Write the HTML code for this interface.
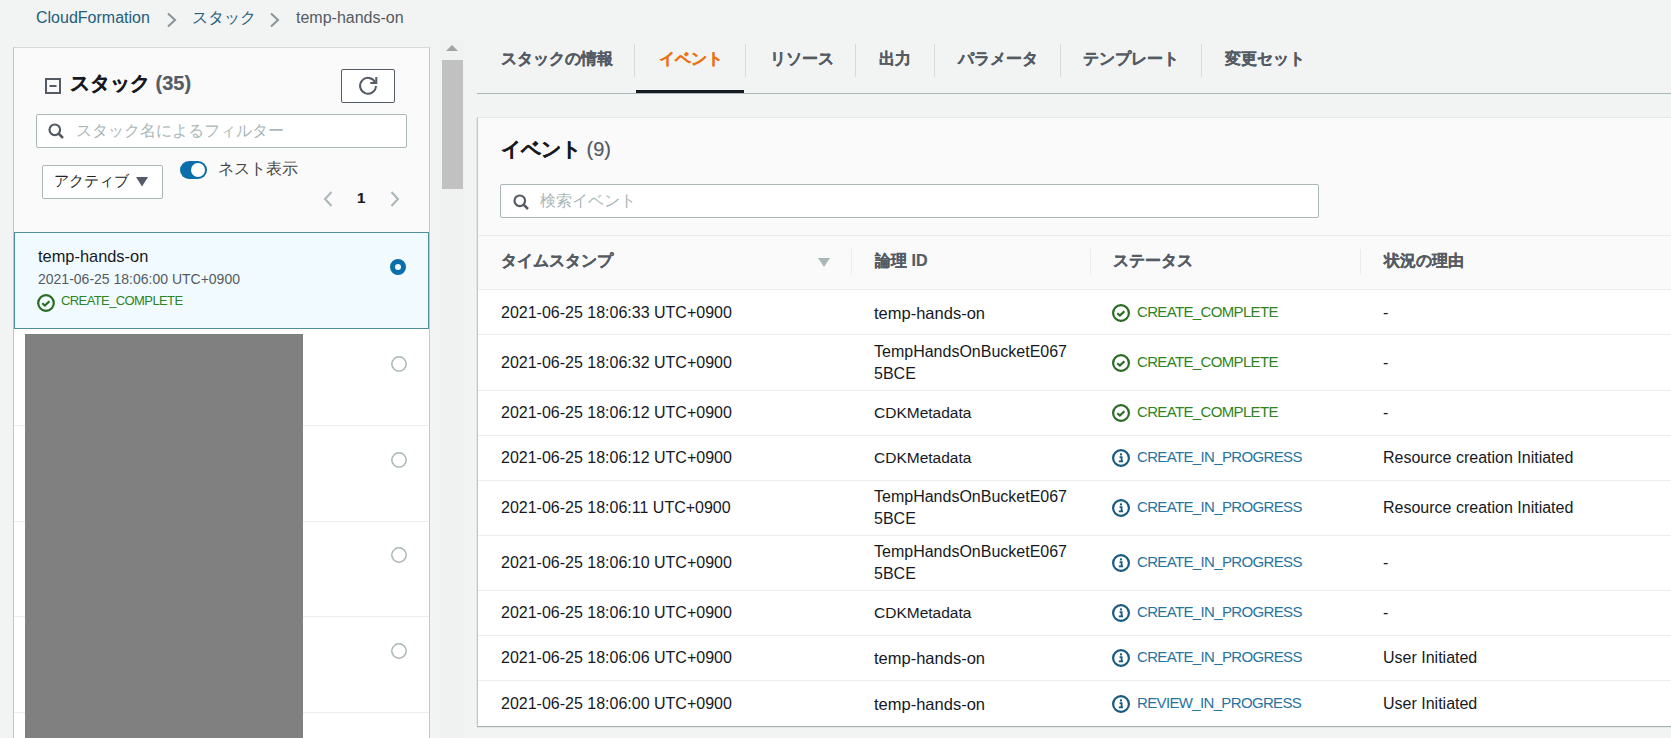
<!DOCTYPE html>
<html><head><meta charset="utf-8">
<style>
*{box-sizing:border-box;margin:0;padding:0}
html,body{width:1671px;height:738px;overflow:hidden;background:#f2f3f3;font-family:"Liberation Sans",sans-serif;color:#16191f}
.a{position:absolute;white-space:nowrap}
.t16{font-size:16px;line-height:20px}
.link{color:#23607a}
.gray{color:#545b64}
.b{font-weight:bold;-webkit-text-stroke:0.2px currentColor}
svg{position:absolute;overflow:visible}
.sep{position:absolute;height:1px;background:#eaeded}
.vdiv{position:absolute;width:1px;background:#d5dbdb}
.green{color:#2d8522}
.blue{color:#2773a0}
</style></head><body>

<!-- breadcrumb -->
<div class="a t16 link" style="left:36px;top:8px">CloudFormation</div>
<svg style="left:166px;top:12px" width="11" height="16" viewBox="0 0 11 16"><path d="M2 1.5 L9 8 L2 14.5" fill="none" stroke="#879596" stroke-width="2"/></svg>
<div class="a t16 link" style="left:192px;top:8px">スタック</div>
<svg style="left:269px;top:12px" width="11" height="16" viewBox="0 0 11 16"><path d="M2 1.5 L9 8 L2 14.5" fill="none" stroke="#879596" stroke-width="2"/></svg>
<div class="a t16 gray" style="left:296px;top:8px">temp-hands-on</div>

<!-- left panel -->
<div class="a" style="left:13px;top:47px;width:417px;height:700px;background:#fafafa;border:1px solid #d5dbdb;border-left-color:#c4c4c4;border-right-color:#c8c8c8"></div>
<div class="a" style="left:14px;top:232px;width:415px;height:510px;background:#fff"></div>

<svg style="left:45px;top:78px" width="16" height="16" viewBox="0 0 16 16"><rect x="1" y="1" width="14" height="14" fill="none" stroke="#545b64" stroke-width="2"/><path d="M4.5 8 H11.5" stroke="#545b64" stroke-width="2"/></svg>
<div class="a b" style="left:70px;top:71px;font-size:20px;line-height:24px">スタック <span class="gray">(35)</span></div>

<div class="a" style="left:341px;top:69px;width:54px;height:34px;border:1px solid #545b64;border-radius:2px;background:#fff"></div>
<svg style="left:358px;top:76px" width="20" height="20" viewBox="0 0 20 20"><path d="M17.9 9.9 A7.9 7.9 0 1 1 17.1 6.3" fill="none" stroke="#545b64" stroke-width="2"/><path d="M12.3 7 H18.3 V1" fill="none" stroke="#545b64" stroke-width="2"/></svg>

<div class="a" style="left:36px;top:114px;width:371px;height:34px;border:1px solid #aab7b8;border-radius:2px;background:#fff"></div>
<svg style="left:48px;top:123px" width="17" height="17" viewBox="0 0 17 17"><circle cx="6.8" cy="6.8" r="5.3" fill="none" stroke="#545b64" stroke-width="2.2"/><path d="M10.5 10.5 L15 15" stroke="#545b64" stroke-width="2.5"/></svg>
<div class="a t16" style="left:76px;top:121px;color:#aab7b8;font-size:15.6px">スタック名によるフィルター</div>

<div class="a" style="left:42px;top:165px;width:121px;height:34px;border:1px solid #aab7b8;border-radius:2px;background:#fff"></div>
<div class="a t16" style="left:54px;top:171px;color:#222;font-size:15.4px">アクティブ</div>
<svg style="left:136px;top:177px" width="12" height="10" viewBox="0 0 12 10"><path d="M0 0 H12 L6 9.5Z" fill="#545b64"/></svg>

<div class="a" style="left:180px;top:161px;width:27px;height:18px;border-radius:9px;background:#0a6eab"></div>
<div class="a" style="left:191px;top:163px;width:14px;height:14px;border-radius:7px;background:#fff"></div>
<div class="a t16" style="left:218px;top:159px;color:#444">ネスト表示</div>

<svg style="left:323px;top:191px" width="10" height="16" viewBox="0 0 10 16"><path d="M8.5 1 L2 8 L8.5 15" fill="none" stroke="#aab7b8" stroke-width="2"/></svg>
<div class="a b" style="left:357px;top:188px;font-size:15px;line-height:20px">1</div>
<svg style="left:390px;top:191px" width="10" height="16" viewBox="0 0 10 16"><path d="M1.5 1 L8 8 L1.5 15" fill="none" stroke="#aab7b8" stroke-width="2"/></svg>

<!-- selected item -->
<div class="a" style="left:14px;top:232px;width:415px;height:97px;border:1px solid #4f8f9c;background:#f1faff"></div>
<div class="a t16" style="left:38px;top:246px;font-size:16.4px">temp-hands-on</div>
<div class="a gray" style="left:38px;top:270px;font-size:14px;line-height:18px">2021-06-25 18:06:00 UTC+0900</div>
<svg style="left:37px;top:294px" width="18" height="18" viewBox="0 0 18 18"><circle cx="9" cy="9" r="7.8" fill="none" stroke="#2a6b22" stroke-width="2.2"/><path d="M5.3 9.2 L7.9 11.6 L12.4 7.2" fill="none" stroke="#2a6b22" stroke-width="2.2"/></svg>
<div class="a green" style="left:61px;top:293px;font-size:13px;line-height:16px;letter-spacing:-0.6px">CREATE_COMPLETE</div>
<svg style="left:390px;top:259px" width="16" height="16" viewBox="0 0 16 16"><circle cx="8" cy="8" r="5.5" fill="none" stroke="#0a6eab" stroke-width="5"/></svg>

<!-- list rows -->
<div class="sep" style="left:14px;top:425px;width:415px"></div>
<div class="sep" style="left:14px;top:521px;width:415px"></div>
<div class="sep" style="left:14px;top:616px;width:415px"></div>
<div class="sep" style="left:14px;top:712px;width:415px"></div>
<svg style="left:391px;top:356px" width="16" height="16" viewBox="0 0 16 16"><circle cx="8" cy="8" r="7.2" fill="none" stroke="#aab7b8" stroke-width="1.5"/></svg>
<svg style="left:391px;top:452px" width="16" height="16" viewBox="0 0 16 16"><circle cx="8" cy="8" r="7.2" fill="none" stroke="#aab7b8" stroke-width="1.5"/></svg>
<svg style="left:391px;top:547px" width="16" height="16" viewBox="0 0 16 16"><circle cx="8" cy="8" r="7.2" fill="none" stroke="#aab7b8" stroke-width="1.5"/></svg>
<svg style="left:391px;top:643px" width="16" height="16" viewBox="0 0 16 16"><circle cx="8" cy="8" r="7.2" fill="none" stroke="#aab7b8" stroke-width="1.5"/></svg>
<div class="a" style="left:25px;top:334px;width:278px;height:404px;background:#808080"></div>

<!-- scrollbar -->
<div class="a" style="left:440px;top:40px;width:24px;height:698px;background:#f0f1f1"></div>
<div class="a" style="left:442px;top:60px;width:21px;height:129px;background:#c1c1c1"></div>
<svg style="left:446px;top:45px" width="12" height="6" viewBox="0 0 12 6"><path d="M0 6 L6 0 L12 6Z" fill="#a3a3a3"/></svg>

<!-- tabs -->
<div class="a" style="left:477px;top:93px;width:1194px;height:1px;background:#aab7b8"></div>
<div class="a t16 b gray" style="left:501px;top:49px">スタックの情報</div>
<div class="a t16 b" style="left:659px;top:49px;color:#ec7211">イベント</div>
<div class="a t16 b gray" style="left:770px;top:49px">リソース</div>
<div class="a t16 b gray" style="left:879px;top:49px">出力</div>
<div class="a t16 b gray" style="left:958px;top:49px">パラメータ</div>
<div class="a t16 b gray" style="left:1083px;top:49px">テンプレート</div>
<div class="a t16 b gray" style="left:1225px;top:49px">変更セット</div>
<div class="vdiv" style="left:634px;top:44px;height:33px"></div>
<div class="vdiv" style="left:745px;top:44px;height:33px"></div>
<div class="vdiv" style="left:855px;top:44px;height:33px"></div>
<div class="vdiv" style="left:934px;top:44px;height:33px"></div>
<div class="vdiv" style="left:1060px;top:44px;height:33px"></div>
<div class="vdiv" style="left:1201px;top:44px;height:33px"></div>
<div class="a" style="left:636px;top:90px;width:108px;height:3px;background:#16191f"></div>

<!-- events container -->
<div class="a" style="left:477px;top:117px;width:1200px;height:609px;background:#fafafa;border:1px solid #e6e8e8;border-left-color:#c4c4c4;box-shadow:0 1px 1px 0 rgba(0,28,36,.3)"></div>
<div class="a b" style="left:501px;top:137px;font-size:20px;line-height:24px">イベント <span class="gray" style="font-weight:normal">(9)</span></div>
<div class="a" style="left:500px;top:184px;width:819px;height:34px;border:1px solid #aab7b8;border-radius:2px;background:#fff"></div>
<svg style="left:513px;top:194px" width="17" height="17" viewBox="0 0 17 17"><circle cx="6.8" cy="6.8" r="5.3" fill="none" stroke="#545b64" stroke-width="2.2"/><path d="M10.5 10.5 L15 15" stroke="#545b64" stroke-width="2.5"/></svg>
<div class="a t16" style="left:540px;top:191px;color:#aab7b8">検索イベント</div>

<div class="sep" style="left:478px;top:235px;width:1193px"></div>
<div class="a" style="left:478px;top:289px;width:1193px;height:437px;background:#fff"></div>
<div class="sep" style="left:478px;top:289px;width:1193px"></div>
<div class="a t16 b gray" style="left:501px;top:251px">タイムスタンプ</div>
<svg style="left:818px;top:258px" width="12" height="9" viewBox="0 0 12 9"><path d="M0 0 H12 L6 9Z" fill="#aab7b8"/></svg>
<div class="vdiv" style="left:851px;top:249px;height:26px;background:#eaeded"></div>
<div class="a t16 b gray" style="left:875px;top:251px">論理 ID</div>
<div class="vdiv" style="left:1090px;top:249px;height:26px;background:#eaeded"></div>
<div class="a t16 b gray" style="left:1113px;top:251px">ステータス</div>
<div class="vdiv" style="left:1360px;top:249px;height:26px;background:#eaeded"></div>
<div class="a t16 b gray" style="left:1384px;top:251px">状況の理由</div>

<!-- ROWS -->
<div class="a t16" style="left:501px;top:302px;line-height:22px">2021-06-25 18:06:33 UTC+0900</div>
<div class="a t16" style="left:874px;top:302px;line-height:22px;font-size:16.5px">temp-hands-on</div>
<svg style="left:1112px;top:304px" width="18" height="18" viewBox="0 0 18 18"><circle cx="9" cy="9" r="7.9" fill="none" stroke="#2a6b22" stroke-width="2.2"/><path d="M5.3 9.2 L7.9 11.6 L12.4 7.2" fill="none" stroke="#2a6b22" stroke-width="2.2"/></svg>
<div class="a green" style="left:1137px;top:301px;font-size:15px;line-height:22px;letter-spacing:-0.65px">CREATE_COMPLETE</div>
<div class="a t16" style="left:1383px;top:302px;line-height:22px">-</div>
<div class="sep" style="left:478px;top:334px;width:1193px"></div>
<div class="a t16" style="left:501px;top:351.5px;line-height:22px">2021-06-25 18:06:32 UTC+0900</div>
<div class="a t16" style="left:874px;top:340.5px;line-height:22px;font-size:16px">TempHandsOnBucketE067<br>5BCE</div>
<svg style="left:1112px;top:353.5px" width="18" height="18" viewBox="0 0 18 18"><circle cx="9" cy="9" r="7.9" fill="none" stroke="#2a6b22" stroke-width="2.2"/><path d="M5.3 9.2 L7.9 11.6 L12.4 7.2" fill="none" stroke="#2a6b22" stroke-width="2.2"/></svg>
<div class="a green" style="left:1137px;top:350.5px;font-size:15px;line-height:22px;letter-spacing:-0.65px">CREATE_COMPLETE</div>
<div class="a t16" style="left:1383px;top:351.5px;line-height:22px">-</div>
<div class="sep" style="left:478px;top:390px;width:1193px"></div>
<div class="a t16" style="left:501px;top:402px;line-height:22px">2021-06-25 18:06:12 UTC+0900</div>
<div class="a t16" style="left:874px;top:402px;line-height:22px;font-size:15.5px">CDKMetadata</div>
<svg style="left:1112px;top:404px" width="18" height="18" viewBox="0 0 18 18"><circle cx="9" cy="9" r="7.9" fill="none" stroke="#2a6b22" stroke-width="2.2"/><path d="M5.3 9.2 L7.9 11.6 L12.4 7.2" fill="none" stroke="#2a6b22" stroke-width="2.2"/></svg>
<div class="a green" style="left:1137px;top:401px;font-size:15px;line-height:22px;letter-spacing:-0.65px">CREATE_COMPLETE</div>
<div class="a t16" style="left:1383px;top:402px;line-height:22px">-</div>
<div class="sep" style="left:478px;top:435px;width:1193px"></div>
<div class="a t16" style="left:501px;top:447px;line-height:22px">2021-06-25 18:06:12 UTC+0900</div>
<div class="a t16" style="left:874px;top:447px;line-height:22px;font-size:15.5px">CDKMetadata</div>
<svg style="left:1112px;top:449px" width="18" height="18" viewBox="0 0 18 18"><circle cx="9" cy="9" r="7.9" fill="none" stroke="#185a80" stroke-width="2.2"/><rect x="8" y="4.4" width="2" height="2" fill="#185a80"/><path d="M7.6 8.2 H9.6 V11.8 M6.8 12.3 H11" fill="none" stroke="#185a80" stroke-width="1.8"/></svg>
<div class="a blue" style="left:1137px;top:446px;font-size:15px;line-height:22px;letter-spacing:-0.65px">CREATE_IN_PROGRESS</div>
<div class="a t16" style="left:1383px;top:447px;line-height:22px">Resource creation Initiated</div>
<div class="sep" style="left:478px;top:480px;width:1193px"></div>
<div class="a t16" style="left:501px;top:497px;line-height:22px">2021-06-25 18:06:11 UTC+0900</div>
<div class="a t16" style="left:874px;top:486px;line-height:22px;font-size:16px">TempHandsOnBucketE067<br>5BCE</div>
<svg style="left:1112px;top:499px" width="18" height="18" viewBox="0 0 18 18"><circle cx="9" cy="9" r="7.9" fill="none" stroke="#185a80" stroke-width="2.2"/><rect x="8" y="4.4" width="2" height="2" fill="#185a80"/><path d="M7.6 8.2 H9.6 V11.8 M6.8 12.3 H11" fill="none" stroke="#185a80" stroke-width="1.8"/></svg>
<div class="a blue" style="left:1137px;top:496px;font-size:15px;line-height:22px;letter-spacing:-0.65px">CREATE_IN_PROGRESS</div>
<div class="a t16" style="left:1383px;top:497px;line-height:22px">Resource creation Initiated</div>
<div class="sep" style="left:478px;top:535px;width:1193px"></div>
<div class="a t16" style="left:501px;top:552px;line-height:22px">2021-06-25 18:06:10 UTC+0900</div>
<div class="a t16" style="left:874px;top:541px;line-height:22px;font-size:16px">TempHandsOnBucketE067<br>5BCE</div>
<svg style="left:1112px;top:554px" width="18" height="18" viewBox="0 0 18 18"><circle cx="9" cy="9" r="7.9" fill="none" stroke="#185a80" stroke-width="2.2"/><rect x="8" y="4.4" width="2" height="2" fill="#185a80"/><path d="M7.6 8.2 H9.6 V11.8 M6.8 12.3 H11" fill="none" stroke="#185a80" stroke-width="1.8"/></svg>
<div class="a blue" style="left:1137px;top:551px;font-size:15px;line-height:22px;letter-spacing:-0.65px">CREATE_IN_PROGRESS</div>
<div class="a t16" style="left:1383px;top:552px;line-height:22px">-</div>
<div class="sep" style="left:478px;top:590px;width:1193px"></div>
<div class="a t16" style="left:501px;top:602px;line-height:22px">2021-06-25 18:06:10 UTC+0900</div>
<div class="a t16" style="left:874px;top:602px;line-height:22px;font-size:15.5px">CDKMetadata</div>
<svg style="left:1112px;top:604px" width="18" height="18" viewBox="0 0 18 18"><circle cx="9" cy="9" r="7.9" fill="none" stroke="#185a80" stroke-width="2.2"/><rect x="8" y="4.4" width="2" height="2" fill="#185a80"/><path d="M7.6 8.2 H9.6 V11.8 M6.8 12.3 H11" fill="none" stroke="#185a80" stroke-width="1.8"/></svg>
<div class="a blue" style="left:1137px;top:601px;font-size:15px;line-height:22px;letter-spacing:-0.65px">CREATE_IN_PROGRESS</div>
<div class="a t16" style="left:1383px;top:602px;line-height:22px">-</div>
<div class="sep" style="left:478px;top:635px;width:1193px"></div>
<div class="a t16" style="left:501px;top:647px;line-height:22px">2021-06-25 18:06:06 UTC+0900</div>
<div class="a t16" style="left:874px;top:647px;line-height:22px;font-size:16.5px">temp-hands-on</div>
<svg style="left:1112px;top:649px" width="18" height="18" viewBox="0 0 18 18"><circle cx="9" cy="9" r="7.9" fill="none" stroke="#185a80" stroke-width="2.2"/><rect x="8" y="4.4" width="2" height="2" fill="#185a80"/><path d="M7.6 8.2 H9.6 V11.8 M6.8 12.3 H11" fill="none" stroke="#185a80" stroke-width="1.8"/></svg>
<div class="a blue" style="left:1137px;top:646px;font-size:15px;line-height:22px;letter-spacing:-0.65px">CREATE_IN_PROGRESS</div>
<div class="a t16" style="left:1383px;top:647px;line-height:22px">User Initiated</div>
<div class="sep" style="left:478px;top:680px;width:1193px"></div>
<div class="a t16" style="left:501px;top:692.5px;line-height:22px">2021-06-25 18:06:00 UTC+0900</div>
<div class="a t16" style="left:874px;top:692.5px;line-height:22px;font-size:16.5px">temp-hands-on</div>
<svg style="left:1112px;top:694.5px" width="18" height="18" viewBox="0 0 18 18"><circle cx="9" cy="9" r="7.9" fill="none" stroke="#185a80" stroke-width="2.2"/><rect x="8" y="4.4" width="2" height="2" fill="#185a80"/><path d="M7.6 8.2 H9.6 V11.8 M6.8 12.3 H11" fill="none" stroke="#185a80" stroke-width="1.8"/></svg>
<div class="a blue" style="left:1137px;top:691.5px;font-size:15px;line-height:22px;letter-spacing:-0.65px">REVIEW_IN_PROGRESS</div>
<div class="a t16" style="left:1383px;top:692.5px;line-height:22px">User Initiated</div>
<!-- /ROWS -->
</body></html>
